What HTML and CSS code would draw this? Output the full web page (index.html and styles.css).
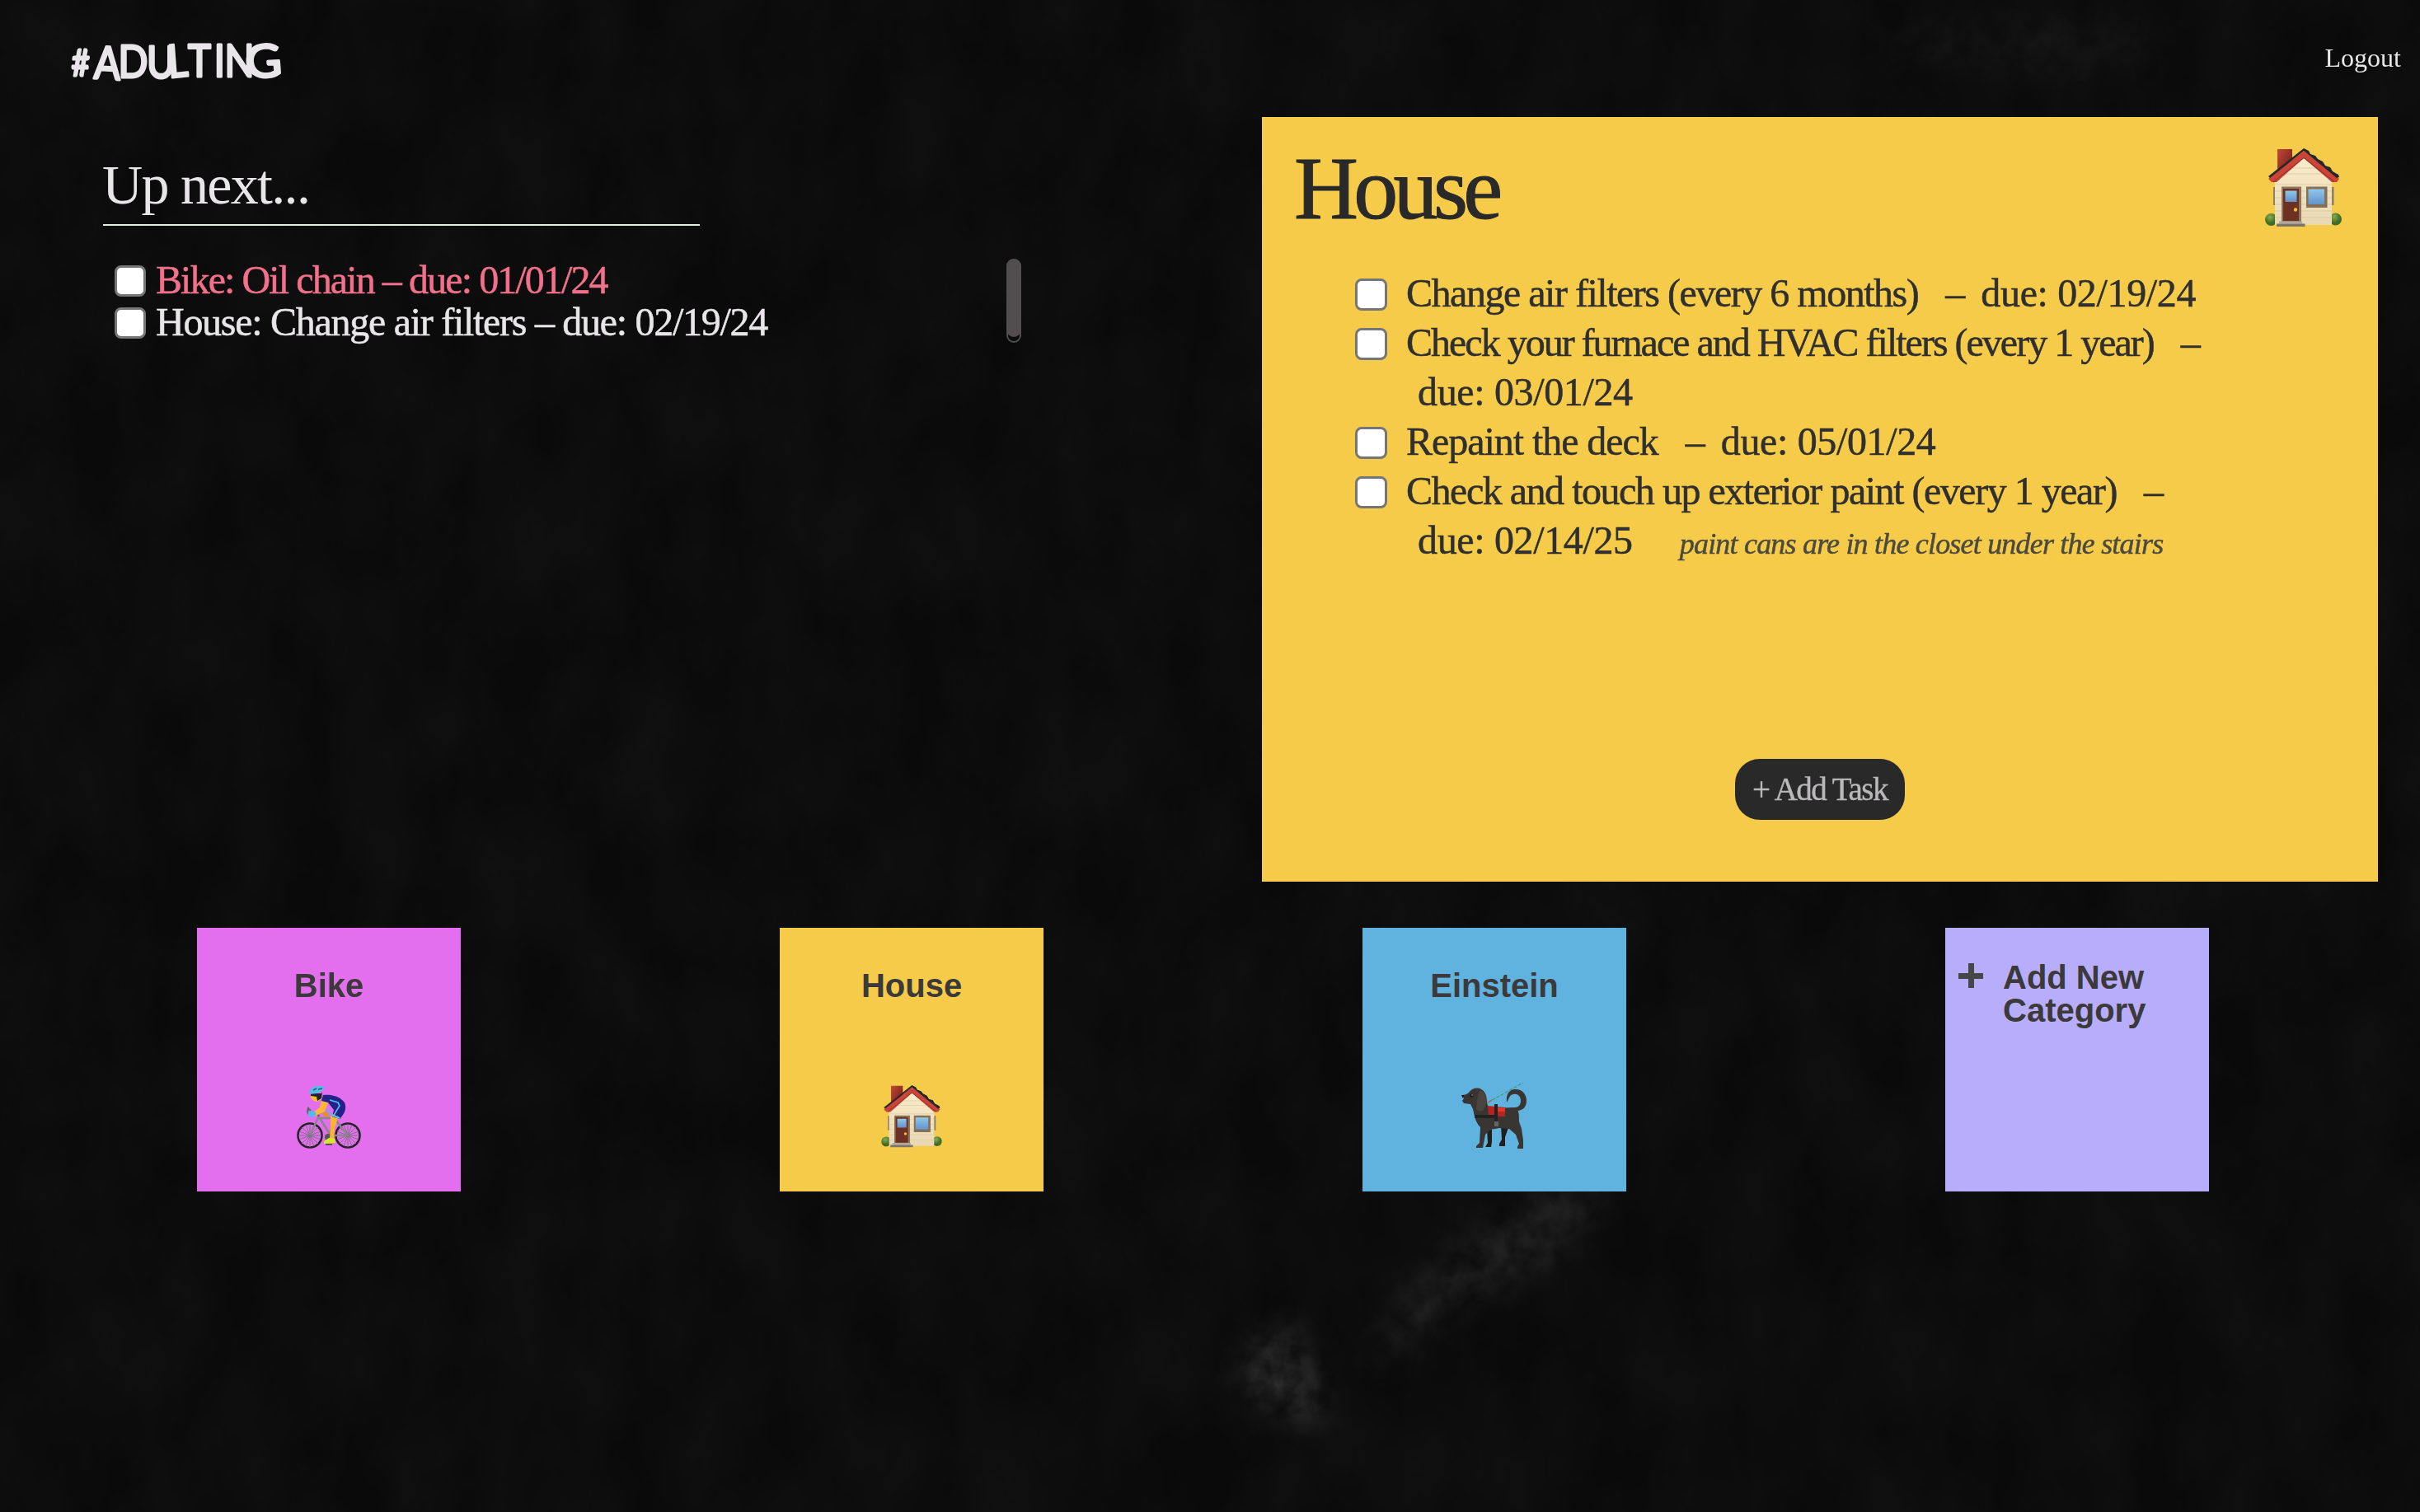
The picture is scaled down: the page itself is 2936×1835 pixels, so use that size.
FILE: index.html
```html
<!DOCTYPE html>
<html lang="en">
<head>
<meta charset="utf-8">
<title>#Adulting</title>
<link rel="stylesheet" href="styles.css">
</head>
<body>
<svg class="chalkboard" width="2936" height="1835" aria-hidden="true">
  <defs>
    <filter id="dust" x="0" y="0" width="100%" height="100%">
      <feTurbulence type="fractalNoise" baseFrequency="0.012 0.007" numOctaves="6" seed="8"/>
      <feColorMatrix values="0 0 0 0 1  0 0 0 0 1  0 0 0 0 1  0.04 0 0 0 -0.01"/>
    </filter>
    <filter id="smudge" x="-30%" y="-30%" width="160%" height="160%">
      <feGaussianBlur in="SourceGraphic" stdDeviation="22" result="soft"/>
      <feTurbulence type="fractalNoise" baseFrequency="0.035" numOctaves="6" seed="4"/>
      <feColorMatrix values="0 0 0 0 1  0 0 0 0 1  0 0 0 0 1  1.6 0 0 0 -0.25"/>
      <feComposite in2="soft" operator="in"/>
    </filter>
  </defs>
  <rect width="2936" height="1835" fill="#0a0a0a"/>
  <rect width="2936" height="1835" filter="url(#dust)"/>
  <g filter="url(#smudge)">
    <path d="M1510 1640 L1555 1595 L1600 1660 L1612 1725 L1580 1730 L1505 1690Z" fill="#fff" opacity=".15"/>
    <path d="M1650 1680 L1700 1570 L1790 1490 L1900 1440 L1960 1450 L1880 1540 L1760 1590 L1680 1650Z" fill="#fff" opacity=".09"/>
    <ellipse cx="2450" cy="55" rx="190" ry="35" fill="#fff" opacity=".03"/>
  </g>
</svg>
<svg width="0" height="0" class="sprite" aria-hidden="true">
  <defs>
    <linearGradient id="wall" x1="0" y1="0" x2="0" y2="1"><stop offset="0" stop-color="#faedcb"/><stop offset="1" stop-color="#e9d8b4"/></linearGradient>
    <linearGradient id="glass" x1="0" y1="0" x2="0" y2="1"><stop offset="0" stop-color="#8fc7ea"/><stop offset="1" stop-color="#6593cb"/></linearGradient>
    <linearGradient id="brick" x1="0" y1="0" x2="1" y2="1"><stop offset="0" stop-color="#c24738"/><stop offset="1" stop-color="#651712"/></linearGradient>
    <radialGradient id="bush" cx=".4" cy=".3"><stop offset="0" stop-color="#86ae52"/><stop offset="1" stop-color="#426b24"/></radialGradient>
    <symbol id="house" viewBox="0 0 93 96">
      <circle cx="7.500" cy="86.500" r="7.500" fill="url(#bush)"/>
      <circle cx="85.500" cy="86" r="7.500" fill="url(#bush)"/>
      <path d="M10 47h3v22h-3zM80 47h3.500v22H80z" fill="#8f8064"/>
      <path d="M15 1h18v22L15 36z" fill="url(#brick)"/>
      <path d="M12 36 47 8 81 36v57H12z" fill="url(#wall)"/>
      <path d="M12 44h69M12 52h69M12 60h69M12 68h69M12 76h69M12 84h69M25 31h45M33 24h29" stroke="#dac8a5" stroke-width=".8" fill="none"/>
      <path d="M4 37 47 3l43 34-3 4h-6L47 12 14 41H8z" fill="#cc4437"/>
      <path d="M10 41 47 11.500l37 29" fill="none" stroke="#8e2a22" stroke-width="1"/>
      <path d="M4 34 47 0l6 3 2 4 6 2 3 4 6 3 3 5 6 2 3 5 7 4 1 3-3 1L47 3 6 36z" fill="#24282a"/>
      <path d="M20 46.500h24V89H20z" fill="#8d765b"/><path d="M22 49h19v39H22z" fill="#6c3120"/>
      <path d="M24.500 51.500h14V65h-14z" fill="url(#glass)"/><circle cx="37" cy="74.500" r="2.200" fill="#f1bd48"/>
      <path d="M50 46.500h25.500V72H50z" fill="#857055"/><path d="M52.500 49.500h19.500V68H52.500z" fill="url(#glass)"/>
      <path d="M17 88.500h28v3H17z" fill="#b1a79b"/><path d="M14 91.500h34.500V95H14z" fill="#7c756e"/>
    </symbol>
  </defs>
</svg>

<header class="site-header">
  <svg class="logo" width="262" height="60" viewBox="0 0 262 60">
    <text class="logo-text" transform="scale(.86 1)"><tspan class="logo-hash" x="1" y="46">#</tspan><tspan x="32 67 107 138 165 202 217" y="49 48 49 48.500 47 47 47" rotate="3 0 0 -5 0 0 0">ADULTIN</tspan></text>
    <text class="logo-text" transform="translate(213 49) scale(1.1 1) rotate(-4)">G</text>
  </svg>
  <a class="logout">Logout</a>
</header>

<main>
  <div class="overview">
    <section class="up-next">
      <h2 class="up-next-title">Up next...</h2>
      <div class="up-next-body">
        <ul class="up-next-list">
          <li class="next-item overdue"><input type="checkbox" class="check"><span>Bike: Oil chain – due: 01/01/24</span></li>
          <li class="next-item"><input type="checkbox" class="check"><span>House: Change air filters – due: 02/19/24</span></li>
        </ul>
        <div class="scroll-track"><div class="scroll-thumb"></div></div>
      </div>
    </section>

    <section class="detail">
      <div class="detail-head">
        <h1 class="detail-title">House</h1>
        <svg class="detail-icon" width="93" height="96"><use href="#house"/></svg>
      </div>
      <ul class="tasks">
        <li class="task"><input type="checkbox" class="check"><div><span>Change air filters (every 6 months)</span><span class="dash">–</span><span class="due">due: 02/19/24</span></div></li>
        <li class="task"><input type="checkbox" class="check"><div><span class="tight">Check your furnace and HVAC filters (every 1 year)</span><span class="dash">–</span><br><span class="due wrapped">due: 03/01/24</span></div></li>
        <li class="task"><input type="checkbox" class="check"><div><span class="loose">Repaint the deck</span><span class="dash">–</span><span class="due">due: 05/01/24</span></div></li>
        <li class="task"><input type="checkbox" class="check"><div><span>Check and touch up exterior paint (every 1 year)</span><span class="dash">–</span><br><span class="due wrapped">due: 02/14/25</span><em class="note">paint cans are in the closet under the stairs</em></div></li>
      </ul>
      <button class="add-task">+ Add Task</button>
    </section>
  </div>

  <nav class="categories">
    <div class="tile bike">
      <h3 class="tile-title">Bike</h3>
      <svg class="tile-icon" width="78" height="78" viewBox="0 0 78 78">
        <g fill="none" stroke="#242426" stroke-width="2.600"><circle cx="16" cy="61" r="14.500"/><circle cx="62" cy="61" r="14.500"/></g>
        <path d="M16 47v28M2 61h28M6 51l20 20M26 51 6 71M11 48l10 26M21 48 11 74M3 56l26 10M29 56 3 66M62 47v28M48 61h28M52 51l20 20M72 51 52 71M57 48l10 26M67 48 57 74M49 56l26 10M75 56 49 66" stroke="#77727b" stroke-width=".9"/>
        <path d="M31 32l9 2-2 5-6-1z" fill="#dd932d"/>
        <path d="M16 61 27 37M27 40h19M28 40l13 21M38 62 47 42l15 19H38" fill="none" stroke="#89868f" stroke-width="2.600" stroke-linejoin="round"/>
        <circle cx="38" cy="63" r="4" fill="#56545a"/><path d="M35 72h8" stroke="#555" stroke-width="2"/>
        <path d="M27 38 25 34M18 37c-4-1-6-5-4-9l3 3" fill="none" stroke="#66636a" stroke-width="2.400"/>
        <path d="M30 19l8 2-4 11-13 6-4-3 11-8z" fill="#fcb831"/>
        <path d="m14 32 7-1 3 4-4 4-6-1z" fill="#55b9ed"/>
        <path d="m41 37 9 3-4 12-1 13h-5l1-15z" fill="#fbb62f"/>
        <path d="M32 12c9-1 20 1 26 9 3 7 0 14-6 20l-9-3 2-8-7-9-8-2z" fill="#222189"/>
        <path d="m40 18 10 3 2 4-8 13M37 29l4 7" fill="none" stroke="#54bce9" stroke-width="1.700"/>
        <path d="m43 36 9 4" stroke="#62c8ef" stroke-width="2"/>
        <path d="M17 10h12l1 7-5 3c-4 0-8-3-8-6z" fill="#fdbb33"/>
        <path d="M17 10h13l1-2-1 8-5 3-1-5-7-1z" fill="#20242a"/>
        <path d="M15 8C17 1 26-1 34 2c-2 5-6 8-18 9z" fill="#5bb9e7"/><path d="m20 6 4-2M26 5l5-1" stroke="#245f8b" stroke-width="1.500"/>
        <path d="m39 64 7 1 1 5-14 1v-3z" fill="#d2ed23"/>
      </svg>
    </div>
    <div class="tile house">
      <h3 class="tile-title">House</h3>
      <svg class="tile-icon" width="74" height="76" viewBox="0 0 93 96"><use href="#house" width="93" height="96"/></svg>
    </div>
    <div class="tile einstein">
      <h3 class="tile-title">Einstein</h3>
      <svg class="tile-icon dog" width="80" height="81" viewBox="0 0 80 81">
        <path d="M31 57h6v15l-1 6h-7l3-5zM48 52h10l-5 14v11h-7v-3l3-5z" fill="#211f1e"/>
        <path d="M55 24c-1-9 2-15 9-16 9-1 15 5 15 14 0 7-4 12-12 12l-2-4c4 0 7-3 7-8 0-6-4-9-9-8-5 1-5 5-8 10z" fill="#393532"/>
        <path d="M1 15c3 0 6-1 8-3C12 7 19 5 24 8c6 3 7 10 7 16l2 7 32-1c5 2 5 9 5 17l3 9 2 14v10h-7v-2l2-4-4-11-8-7-12-1-11 2-6 6-3 16h-8v-2l4-4 1-19c-6-6-7-13-9-22l-3-6-8-1-2-3 2-3z" fill="#393532"/>
        <path d="M22 9c6 1 9 8 8 17l-4 8c-4 1-7 0-8-2l1-12z" fill="#4a4541"/>
        <circle cx="12.500" cy="15.500" r="2" fill="#111"/><circle cx="13" cy="15" r=".7" fill="#ddd"/>
        <path d="M0 15h3l-1 4z" fill="#111"/>
        <path d="M32 28l21 2v11H33z" fill="#b9231d"/><path d="m44 30 9 1v4h-9" fill="#e0372b"/>
        <path d="M16 41h28M42 26v27" stroke="#202224" stroke-width="4"/><path d="M40 47h5v6h-5z" fill="#656565"/>
        <path d="m32 24 43-24" stroke="#3d957f" stroke-width="1.200" stroke-dasharray="4 2"/><path d="m32 24 5-3" stroke="#aa6b65" stroke-width="1.500"/>
      </svg>
    </div>
    <div class="tile add-new">
      <span class="plus" aria-hidden="true"></span>
      <h3 class="add-title">Add New Category</h3>
    </div>
  </nav>
</main>
</body>
</html>
```
FILE: styles.css
```css
* { box-sizing: border-box; }

body {
  margin: 0;
  min-height: 1835px;
  background: #0b0b0b;
  color: #e8e6e8;
  font-family: "Liberation Serif", "Times New Roman", serif;
  overflow: hidden;
}

h1, h2, h3, ul { margin: 0; padding: 0; font-weight: 400; }
ul { list-style: none; }

.chalkboard { position: absolute; inset: 0; z-index: -1; }
.sprite { position: absolute; }

.site-header {
  display: flex;
  justify-content: space-between;
  height: 142px;
  padding: 46px 23px 0 86px;
}
.logo { display: block; overflow: visible; }
.logo-text {
  font: 400 55px Lato, sans-serif;
  fill: #e8e6e8;
  stroke: #e8e6e8;
  stroke-width: 3px;
  stroke-linejoin: round;
}
.logo-hash { font-size: 44px; }
.logout { margin-top: 6px; font-size: 32px; line-height: 37px; }

.overview {
  display: grid;
  grid-template-columns: 1406px 1354px;
  height: 928px;
  padding-left: 125px;
}

.up-next { padding-top: 42px; }
.up-next-title {
  width: 724px;
  padding-bottom: 8px;
  border-bottom: 2px solid #e6ebe6;
  font-size: 68px;
  line-height: 80px;
  letter-spacing: -1.7px;
  text-indent: -1px;
}
.up-next-body {
  display: flex;
  justify-content: space-between;
  width: 1114px;
  height: 102px;
  margin-top: 40px;
}
.next-item {
  display: flex;
  gap: 12px;
  padding-left: 14px;
  font-size: 48px;
  line-height: 51px;
  letter-spacing: -1.28px;
  white-space: nowrap;
  -webkit-text-stroke: 0.5px;
}
.overdue { color: #f2708b; letter-spacing: -1.9px; }

.check {
  appearance: none;
  flex: none;
  width: 38px;
  height: 38px;
  margin: 8px 0 0;
  border: 3px solid #767676;
  border-radius: 8px;
  background: #fff;
}

.scroll-track {
  width: 18px;
  height: 102px;
  border: 2px solid #504e4f;
  border-radius: 9px;
}
.scroll-thumb {
  width: 18px;
  height: 95px;
  margin: -2px;
  border-radius: 9px;
  background: #504e4f;
}

.detail {
  display: flex;
  flex-direction: column;
  background: #f6cb4a;
  color: #2f2f2f;
}
.detail-head {
  display: flex;
  justify-content: space-between;
  height: 184px;
  padding: 27px 44px 0 39px;
}
.detail-title {
  color: #292929;
  font-size: 108px;
  line-height: 120px;
  letter-spacing: -5.7px;
  -webkit-text-stroke: 1px;
}
.detail-icon { margin-top: 11px; }

.tasks { height: 595px; padding-left: 113px; }
.task {
  display: flex;
  gap: 23px;
  font-size: 48px;
  line-height: 60px;
  letter-spacing: -1.48px;
  white-space: nowrap;
  -webkit-text-stroke: 0.5px;
}
.task .check { width: 39px; height: 39px; margin-top: 12px; }
.tight { letter-spacing: -2px; }
.loose { letter-spacing: -1.05px; }
.dash { margin-left: 33px; letter-spacing: -1px; }
.due { margin-left: 20px; letter-spacing: -0.35px; }
.wrapped { margin-left: 14px; }
.note {
  margin-left: 57px;
  color: #4a4a40;
  font-size: 36px;
  line-height: 1;
  letter-spacing: -0.8px;
}

.add-task {
  align-self: center;
  width: 206px;
  height: 74px;
  padding: 0;
  border: 0;
  border-radius: 30px;
  background: #292929;
  color: #bab8ba;
  font: 39px/74px "Liberation Serif", serif;
  letter-spacing: -1.5px;
  -webkit-text-stroke: 0.4px;
}

.categories {
  display: grid;
  grid-template-columns: repeat(4, 707px);
  justify-items: center;
  padding: 56px 0 0 45.5px;
}
.tile {
  display: flex;
  flex-direction: column;
  align-items: center;
  width: 320px;
  height: 320px;
  color: #3b393a;
  font-family: "Liberation Sans", Arial, sans-serif;
}
.tile-title {
  height: 144px;
  margin-top: 47px;
  font-size: 40px;
  font-weight: 700;
  line-height: 46px;
}
.dog { margin-top: -3px; }
.bike { background: #e36fee; }
.house { background: #f6cb4a; }
.einstein { background: #61b3df; }
.add-new {
  flex-direction: row;
  align-items: flex-start;
  gap: 24px;
  padding: 40px 16px 0;
  background: #b8adfa;
}
.plus {
  flex: none;
  width: 30px;
  height: 30px;
  margin-top: 3px;
  background:
    linear-gradient(#464646, #464646) center / 7px 30px no-repeat,
    linear-gradient(#464646, #464646) center / 30px 7px no-repeat;
}
.add-title {
  font-size: 40px;
  font-weight: 700;
  line-height: 40px;
}
```
